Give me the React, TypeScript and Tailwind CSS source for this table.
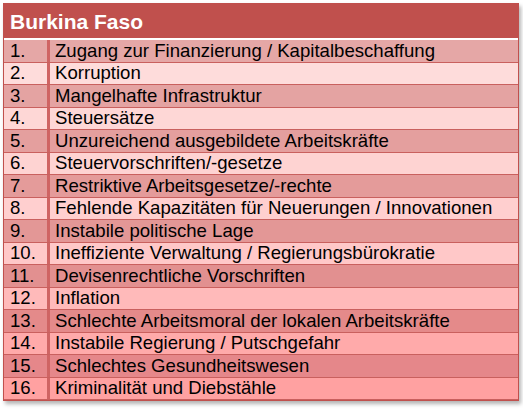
import React from "react";

const rows: [string, string][] = [
  ["1.", "Zugang zur Finanzierung / Kapitalbeschaffung"],
  ["2.", "Korruption"],
  ["3.", "Mangelhafte Infrastruktur"],
  ["4.", "Steuersätze"],
  ["5.", "Unzureichend ausgebildete Arbeitskräfte"],
  ["6.", "Steuervorschriften/-gesetze"],
  ["7.", "Restriktive Arbeitsgesetze/-rechte"],
  ["8.", "Fehlende Kapazitäten für Neuerungen / Innovationen"],
  ["9.", "Instabile politische Lage"],
  ["10.", "Ineffiziente Verwaltung / Regierungsbürokratie"],
  ["11.", "Devisenrechtliche Vorschriften"],
  ["12.", "Inflation"],
  ["13.", "Schlechte Arbeitsmoral der lokalen Arbeitskräfte"],
  ["14.", "Instabile Regierung / Putschgefahr"],
  ["15.", "Schlechtes Gesundheitswesen"],
  ["16.", "Kriminalität und Diebstähle"],
];

const colors = [
  "#e5a7a6",
  "#fedcdb",
  "#e4a3a2",
  "#fed7d6",
  "#e49f9e",
  "#fed3d2",
  "#e49b9a",
  "#ffcfcf",
  "#e39796",
  "#ffc8c8",
  "#e29090",
  "#ffbaba",
  "#e48a8a",
  "#ffaaaa",
  "#e5878a",
  "#ffa1a1",
];

export default function App() {
  return (
    <div className="w-[523px] h-[410px] bg-white pt-[3px] pl-[3px]" style={{ fontFamily: '"Liberation Sans", Arial, sans-serif' }}>
      <div className="w-[516px] shadow-[2px_3px_4px_rgba(0,0,0,0.3)] border-x border-[#c0504d] border-b">
        <div className="h-[35px] bg-[#c0504d] flex items-center pl-[6px] pt-[2px] text-white font-bold text-[21px] leading-none">
          Burkina Faso
        </div>
        <div className="h-[2px] bg-white" />
        {rows.map(([n, t], i) => (
          <div
            key={i}
            className="h-[22.5px] flex border-b border-[#c9605e] text-black text-[18.6px] leading-none"
            style={{ backgroundColor: colors[i] }}
          >
            <div className="w-[46px] flex items-center pl-[6px] pt-[1px] border-r-[3px] border-[#cf6463]">{n}</div>
            <div className="flex items-center pl-[5px] pt-[1px] whitespace-nowrap">{t}</div>
          </div>
        ))}
      </div>
    </div>
  );
}
